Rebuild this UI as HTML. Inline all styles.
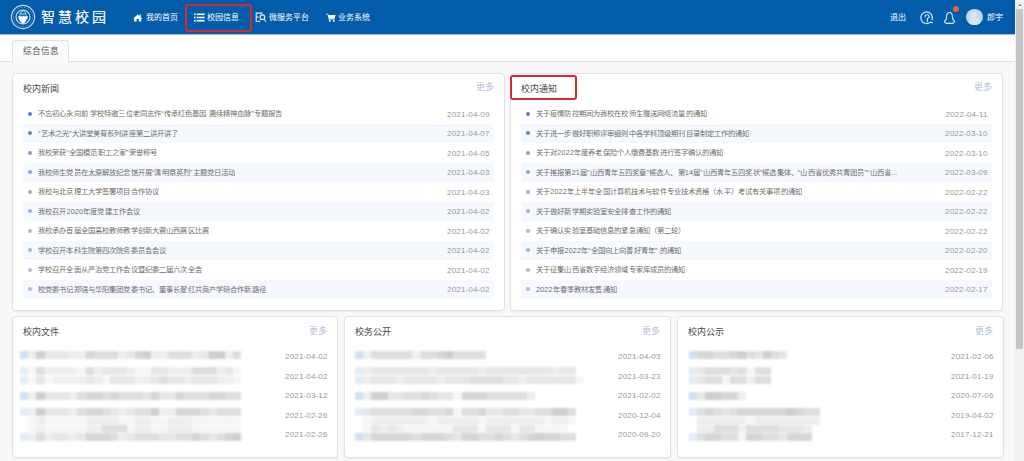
<!DOCTYPE html>
<html lang="zh-CN">
<head>
<meta charset="utf-8">
<style>
*{margin:0;padding:0;box-sizing:border-box}
html,body{width:1024px;height:461px;overflow:hidden}
body{font-family:"Liberation Sans",sans-serif;background:#f8f8f8;position:relative;color:#555}
.hdr{position:absolute;left:0;top:0;width:1015px;height:34px;background:#035caa;box-shadow:0 1px 0 #9fbcd8}
.title{position:absolute;left:41px;top:7px;font-size:14px;line-height:20px;color:#fff;letter-spacing:2.9px;font-weight:500;-webkit-text-stroke:0.15px #fff}
.nav{position:absolute;top:11.8px;font-size:8px;line-height:12px;color:#fff;white-space:nowrap}
.redbox{position:absolute;left:185px;top:3.5px;width:67px;height:28px;border:2.2px solid #d22b33;border-radius:3px}
.rdot{position:absolute;left:953.2px;top:5.9px;width:6px;height:6px;border-radius:50%;background:#f0603a}
.avatar{position:absolute;left:966px;top:8.5px;width:16.5px;height:16px;border-radius:50%;overflow:hidden;background:radial-gradient(circle at 50% 45%,#c9def2 0,#bfd7ef 60%,#a6c7e9 100%)}
.ah{position:absolute;left:5.2px;top:3px;width:6px;height:6px;border-radius:50%;background:#d8e7f4}
.ab{position:absolute;left:2.5px;top:9.5px;width:11.5px;height:9px;border-radius:50%;background:#d8e7f4}
.top{position:absolute;left:0;top:35px;width:1015px;height:27px;background:#fff;border-bottom:1px solid #e2e2e2}
.tab{position:absolute;left:12px;top:40px;width:57px;height:23px;background:#fafafa;border:1px solid #e2e2e2;border-bottom:none;border-radius:3px 3px 0 0;font-size:8.6px;color:#555;text-align:center;line-height:21.5px}
.scroll{position:absolute;left:1015px;top:0;width:9px;height:461px;background:#f1f1f1}
.arr{position:absolute;left:1017.5px;top:3.5px;width:0;height:0;border-left:2.5px solid transparent;border-right:2.5px solid transparent;border-bottom:2.5px solid #8a8a8a}
.thumb{position:absolute;left:1016px;top:9px;width:7px;height:340px;background:#c6c6c6}
.panel{position:absolute;background:#fff;border:1px solid #e2e2e2;border-radius:4px;box-shadow:0 1px 1.5px rgba(0,0,0,.05)}
.ph{position:absolute;left:10px;top:8.6px;font-size:9px;color:#484848;line-height:12px}
.more{position:absolute;right:10px;top:6.6px;font-size:9px;color:#b0c2d9;line-height:12px}
.list{position:absolute;left:10px;right:10px;top:30px}
.row{position:relative;height:19.5px;line-height:19.5px;font-size:7.3px;letter-spacing:0.12px;color:#6e6e6e;white-space:nowrap}
.row.alt{background:#f5f8fc}
.dot{position:absolute;left:5.2px;top:7.6px;width:4.2px;height:4.2px;border-radius:50%;background:#5a80b2}
.row .t{position:absolute;left:15px;overflow:hidden;text-overflow:ellipsis;max-width:370px}
.row .d{position:absolute;right:4.5px;top:0.5px;font-size:8px;letter-spacing:0.15px;color:#999}
.bd{position:absolute;right:9.5px;font-size:8px;letter-spacing:0.15px;line-height:10px;color:#999}
.redbox2{position:absolute;left:510px;top:75px;width:67px;height:25px;border:2.2px solid #d22b33;border-radius:3px}
.pb .ph{top:9.4px}
.pb .more{top:7.5px}
.mz{position:absolute;filter:blur(0.9px)}
</style>
</head>
<body>
<div class="hdr">
  <svg class="logo" width="34" height="34" viewBox="0 0 34 34" style="position:absolute;left:6px;top:0">
    <circle cx="17" cy="17" r="11.6" fill="none" stroke="#c4def7" stroke-width="1.1"/>
    <circle cx="17" cy="17" r="9.6" fill="none" stroke="#8dbbe8" stroke-width="0.8" stroke-dasharray="1 1.3"/>
    <circle cx="17" cy="17" r="7" fill="none" stroke="#d2e6fa" stroke-width="1.1"/>
    <path d="M12.1 16.3 H21.9 Q21.4 20.8 17 23.9 Q12.6 20.8 12.1 16.3Z" fill="#fff"/>
    <path d="M13.6 15.6 Q13.8 11.4 17 10.8 Q20.2 11.4 20.4 15.6" fill="none" stroke="#c9e0f7" stroke-width="0.9"/>
    <path d="M14.6 13.4 H19.4 M14.2 14.8 H19.8" stroke="#a9cdf2" stroke-width="0.7"/>
  </svg>
  <div class="title">智慧校园</div>
  <svg width="10" height="9" viewBox="0 0 10 9" style="position:absolute;left:133px;top:13.6px"><path d="M4.7 0.4 L6.6 2 V0.6 H7.8 V3 L9.3 4.4 L8.2 4.4 V7.4 H5.8 V5 H3.6 V7.4 H1.2 V4.4 L0.1 4.4Z" fill="#fff"/></svg>
  <div class="nav" style="left:146px">我的首页</div>
  <div class="redbox"></div>
  <svg width="11" height="9" viewBox="0 0 11 9" style="position:absolute;left:194px;top:13px"><g fill="#fff"><rect x="0" y="0.5" width="1.6" height="1.6"/><rect x="0" y="3.7" width="1.6" height="1.6"/><rect x="0" y="6.9" width="1.6" height="1.6"/><rect x="2.6" y="0.5" width="8" height="1.6"/><rect x="2.6" y="3.7" width="8" height="1.6"/><rect x="2.6" y="6.9" width="8" height="1.6"/></g></svg>
  <div class="nav" style="left:207px">校园信息</div>
  <svg width="12" height="11" viewBox="0 0 12 11" style="position:absolute;left:255px;top:12px"><g fill="none" stroke="#e6f1fb" stroke-width="1.1"><path d="M7.6 1.1 H1.2 V9.2 H5.6"/><path d="M1.2 5 H3.6"/><circle cx="7.4" cy="5.2" r="2.3"/><path d="M9 7 L10.9 9.8"/></g></svg>
  <div class="nav" style="left:269px">微服务平台</div>
  <svg width="10" height="9" viewBox="0 0 11 9" preserveAspectRatio="none" style="position:absolute;left:325.8px;top:12.8px"><path d="M0 0.8 H2.2 L3 2 H10.6 L9.4 5.8 H3.6 L3.8 6.4 H9.6 V7 H3.2 L1.8 1.6 H0Z" fill="#fff"/><circle cx="4.2" cy="8" r="1" fill="#fff"/><circle cx="8.6" cy="8" r="1" fill="#fff"/></svg>
  <div class="nav" style="left:338px">业务系统</div>

  <div class="nav" style="left:890px">退出</div>
  <svg width="16" height="16" viewBox="0 0 16 16" style="position:absolute;left:918.8px;top:10px"><g fill="none" stroke="#dcecfb" stroke-width="1.15" stroke-linecap="round"><path d="M11.3 12.2 A5.8 5.8 0 1 1 13.1 9.6"/><path d="M11.1 12.3 L13.4 12.6"/><path d="M6.1 6.6 Q6.1 4.7 8.2 4.7 Q10.2 4.7 10.2 6.4 Q10.2 7.7 8.3 8.6 V10.6"/></g><circle cx="8.3" cy="11.7" r="0.6" fill="#dcecfb"/></svg>
  <svg width="14" height="14" viewBox="0 0 14 14" style="position:absolute;left:943px;top:11px"><path d="M6.5 1.5 C4.2 1.5 3.6 3.8 3.6 6 C3.6 8 2.8 9.2 1.4 10.4 C1.4 11.6 3.6 12.4 6.5 12.4 C9.4 12.4 11.6 11.6 11.6 10.4 C10.2 9.2 9.4 8 9.4 6 C9.4 3.8 8.8 1.5 6.5 1.5Z" fill="none" stroke="#dcecfb" stroke-width="1.1" stroke-linejoin="round"/></svg>
  <div class="rdot"></div>
  <div class="avatar"><i class="ah"></i><i class="ab"></i></div>
  <div class="nav" style="left:986.5px">郎宇</div>
</div>
<div class="top"></div>
<div class="tab">综合信息</div>
<div class="scroll"></div>
<div class="thumb"></div><div class="arr"></div>

<div class="panel" style="left:12px;top:73px;width:493px;height:238px">
  <div class="ph">校内新闻</div>
  <div class="more">更多</div>
  <div class="list">
<div class="row"><i class="dot" style="opacity:1"></i><span class="t">不忘初心永向前 学校特邀三位老同志作“传承红色基因 赓续精神血脉”专题报告</span><span class="d">2021-04-09</span></div>
<div class="row alt"><i class="dot" style="opacity:0.95"></i><span class="t">“艺术之光”大讲堂美育系列讲座第二讲开讲了</span><span class="d">2021-04-07</span></div>
<div class="row"><i class="dot" style="opacity:0.75"></i><span class="t">我校荣获“全国模范职工之家”荣誉称号</span><span class="d">2021-04-05</span></div>
<div class="row alt"><i class="dot" style="opacity:0.7"></i><span class="t">我校师生党员在太原解放纪念馆开展“清明祭英烈”主题党日活动</span><span class="d">2021-04-03</span></div>
<div class="row"><i class="dot" style="opacity:0.62"></i><span class="t">我校与北京理工大学签署项目合作协议</span><span class="d">2021-04-03</span></div>
<div class="row alt"><i class="dot" style="opacity:0.58"></i><span class="t">我校召开2020年度党建工作会议</span><span class="d">2021-04-02</span></div>
<div class="row"><i class="dot" style="opacity:0.55"></i><span class="t">我校承办首届全国高校教师教学创新大赛山西赛区比赛</span><span class="d">2021-04-02</span></div>
<div class="row alt"><i class="dot" style="opacity:0.55"></i><span class="t">学校召开本科生院第四次院务委员会会议</span><span class="d">2021-04-02</span></div>
<div class="row"><i class="dot" style="opacity:0.52"></i><span class="t">学校召开全面从严治党工作会议暨纪委二届六次全会</span><span class="d">2021-04-02</span></div>
<div class="row alt"><i class="dot" style="opacity:0.5"></i><span class="t">校党委书记郑强与华阳集团党委书记、董事长翟红共商产学研合作新路径</span><span class="d">2021-04-02</span></div>
  </div>
</div>

<div class="panel" style="left:510px;top:73px;width:493px;height:238px">
  <div class="ph">校内通知</div>
  <div class="more">更多</div>
  <div class="list">
<div class="row"><i class="dot" style="opacity:1"></i><span class="t">关于疫情防控期间为我校在校师生赠送网络流量的通知</span><span class="d">2022-04-11</span></div>
<div class="row alt"><i class="dot" style="opacity:0.95"></i><span class="t">关于进一步做好职称评审细则中各学科顶级期刊目录制定工作的通知</span><span class="d">2022-03-10</span></div>
<div class="row"><i class="dot" style="opacity:0.75"></i><span class="t">关于对2022年度养老保险个人缴费基数进行签字确认的通知</span><span class="d">2022-03-10</span></div>
<div class="row alt"><i class="dot" style="opacity:0.7"></i><span class="t">关于推报第21届“山西青年五四奖章”候选人、第14届“山西青年五四奖状”候选集体、“山西省优秀共青团员”“山西省...</span><span class="d">2022-03-09</span></div>
<div class="row"><i class="dot" style="opacity:0.62"></i><span class="t">关于2022年上半年全国计算机技术与软件专业技术资格（水平）考试有关事项的通知</span><span class="d">2022-02-22</span></div>
<div class="row alt"><i class="dot" style="opacity:0.58"></i><span class="t">关于做好新学期实验室安全排查工作的通知</span><span class="d">2022-02-22</span></div>
<div class="row"><i class="dot" style="opacity:0.55"></i><span class="t">关于确认实验室基础信息的紧急通知（第二轮）</span><span class="d">2022-02-22</span></div>
<div class="row alt"><i class="dot" style="opacity:0.55"></i><span class="t">关于申报2022年“全国向上向善好青年” 的通知</span><span class="d">2022-02-20</span></div>
<div class="row"><i class="dot" style="opacity:0.52"></i><span class="t">关于征集山西省数字经济领域专家库成员的通知</span><span class="d">2022-02-19</span></div>
<div class="row alt"><i class="dot" style="opacity:0.5"></i><span class="t">2022年春季教材发售通知</span><span class="d">2022-02-17</span></div>
  </div>
</div>

<div class="panel pb" style="left:12px;top:316px;width:326px;height:142px">
  <div class="ph">校内文件</div>
  <div class="more">更多</div>
  <div class="bd" style="top:35px">2021-04-02</div>
  <div class="bd" style="top:54.5px">2021-04-02</div>
  <div class="bd" style="top:74px">2021-03-12</div>
  <div class="bd" style="top:93.5px">2021-02-26</div>
  <div class="bd" style="top:113px">2021-02-26</div>
</div>
<div class="panel pb" style="left:344px;top:316px;width:327px;height:142px">
  <div class="ph">校务公开</div>
  <div class="more">更多</div>
  <div class="bd" style="top:35px">2021-04-03</div>
  <div class="bd" style="top:54.5px">2021-03-23</div>
  <div class="bd" style="top:74px">2021-02-02</div>
  <div class="bd" style="top:93.5px">2020-12-04</div>
  <div class="bd" style="top:113px">2020-09-20</div>
</div>
<div class="panel pb" style="left:677px;top:316px;width:327px;height:142px">
  <div class="ph">校内公示</div>
  <div class="more">更多</div>
  <div class="bd" style="top:35px">2021-02-06</div>
  <div class="bd" style="top:54.5px">2021-01-19</div>
  <div class="bd" style="top:74px">2020-07-06</div>
  <div class="bd" style="top:93.5px">2019-04-02</div>
  <div class="bd" style="top:113px">2017-12-21</div>
</div>
<div class="mz" style="left:19.7px;top:351px;width:221.4px;height:8.2px;background:linear-gradient(90deg,#d0e0f2 0.0px,#d0e0f2 8.2px,#eeeeee 8.2px,#eeeeee 16.4px,#cecece 16.4px,#cecece 24.6px,#e6e6e6 24.6px,#e6e6e6 32.8px,#e6e6e6 32.8px,#e6e6e6 41.0px,#e6e6e6 41.0px,#e6e6e6 49.2px,#eeeeee 49.2px,#eeeeee 57.4px,#eeeeee 57.4px,#eeeeee 65.6px,#d6d6d6 65.6px,#d6d6d6 73.8px,#dedede 73.8px,#dedede 82.0px,#dedede 82.0px,#dedede 90.2px,#dedede 90.2px,#dedede 98.4px,#eeeeee 98.4px,#eeeeee 106.6px,#e6e6e6 106.6px,#e6e6e6 114.8px,#d6d6d6 114.8px,#d6d6d6 123.0px,#cecece 123.0px,#cecece 131.2px,#eeeeee 131.2px,#eeeeee 139.4px,#eeeeee 139.4px,#eeeeee 147.6px,#dedede 147.6px,#dedede 155.8px,#dedede 155.8px,#dedede 164.0px,#dedede 164.0px,#dedede 172.2px,#eeeeee 172.2px,#eeeeee 180.4px,#e6e6e6 180.4px,#e6e6e6 188.6px,#cecece 188.6px,#cecece 196.8px,#cecece 196.8px,#cecece 205.0px,#eeeeee 205.0px,#eeeeee 213.2px,#dedede 213.2px,#dedede 221.4px)"></div>
<div class="mz" style="left:19.7px;top:367.3px;width:221.4px;height:8.2px;background:linear-gradient(90deg,#e2edf8 0.0px,#e2edf8 8.2px,#f6f6f6 8.2px,#f6f6f6 16.4px,#dedede 16.4px,#dedede 24.6px,#eeeeee 24.6px,#eeeeee 32.8px,#eeeeee 32.8px,#eeeeee 41.0px,#eeeeee 41.0px,#eeeeee 49.2px,#eeeeee 49.2px,#eeeeee 57.4px,#f6f6f6 57.4px,#f6f6f6 65.6px,#dedede 65.6px,#dedede 73.8px,#eeeeee 73.8px,#eeeeee 82.0px,#e6e6e6 82.0px,#e6e6e6 90.2px,#e6e6e6 90.2px,#e6e6e6 98.4px,#e6e6e6 98.4px,#e6e6e6 106.6px,#eeeeee 106.6px,#eeeeee 114.8px,#f6f6f6 114.8px,#f6f6f6 123.0px,#f6f6f6 123.0px,#f6f6f6 131.2px,#e6e6e6 131.2px,#e6e6e6 139.4px,#e6e6e6 139.4px,#e6e6e6 147.6px,#eeeeee 147.6px,#eeeeee 155.8px,#eeeeee 155.8px,#eeeeee 164.0px,#eeeeee 164.0px,#eeeeee 172.2px,#dedede 172.2px,#dedede 180.4px,#dedede 180.4px,#dedede 188.6px,#dedede 188.6px,#dedede 196.8px,#eeeeee 196.8px,#eeeeee 205.0px,#e6e6e6 205.0px,#e6e6e6 213.2px,#f6f6f6 213.2px,#f6f6f6 221.4px)"></div>
<div class="mz" style="left:19.7px;top:375.5px;width:221.4px;height:8.2px;background:linear-gradient(90deg,#e2edf8 0.0px,#e2edf8 8.2px,#f6f6f6 8.2px,#f6f6f6 16.4px,#e6e6e6 16.4px,#e6e6e6 24.6px,#f6f6f6 24.6px,#f6f6f6 32.8px,#eeeeee 32.8px,#eeeeee 41.0px,#eeeeee 41.0px,#eeeeee 49.2px,#eeeeee 49.2px,#eeeeee 57.4px,#eeeeee 57.4px,#eeeeee 65.6px,#e6e6e6 65.6px,#e6e6e6 73.8px,#eeeeee 73.8px,#eeeeee 82.0px,#f6f6f6 82.0px,#f6f6f6 90.2px,#e6e6e6 90.2px,#e6e6e6 98.4px,#e6e6e6 98.4px,#e6e6e6 106.6px,#e6e6e6 106.6px,#e6e6e6 114.8px,#eeeeee 114.8px,#eeeeee 123.0px,#eeeeee 123.0px,#eeeeee 131.2px,#e6e6e6 131.2px,#e6e6e6 139.4px,#dedede 139.4px,#dedede 147.6px,#e6e6e6 147.6px,#e6e6e6 155.8px,#e6e6e6 155.8px,#e6e6e6 164.0px,#eeeeee 164.0px,#eeeeee 172.2px,#e6e6e6 172.2px,#e6e6e6 180.4px,#e6e6e6 180.4px,#e6e6e6 188.6px,#e6e6e6 188.6px,#e6e6e6 196.8px,#eeeeee 196.8px,#eeeeee 205.0px,#eeeeee 205.0px,#eeeeee 213.2px,#f6f6f6 213.2px,#f6f6f6 221.4px)"></div>
<div class="mz" style="left:19.7px;top:391.9px;width:221.4px;height:8.2px;background:linear-gradient(90deg,#d0e0f2 0.0px,#d0e0f2 8.2px,#eeeeee 8.2px,#eeeeee 16.4px,#cecece 16.4px,#cecece 24.6px,#e6e6e6 24.6px,#e6e6e6 32.8px,#e6e6e6 32.8px,#e6e6e6 41.0px,#e6e6e6 41.0px,#e6e6e6 49.2px,#eeeeee 49.2px,#eeeeee 57.4px,#dedede 57.4px,#dedede 65.6px,#d6d6d6 65.6px,#d6d6d6 73.8px,#d6d6d6 73.8px,#d6d6d6 82.0px,#dedede 82.0px,#dedede 90.2px,#d6d6d6 90.2px,#d6d6d6 98.4px,#dedede 98.4px,#dedede 106.6px,#dedede 106.6px,#dedede 114.8px,#dedede 114.8px,#dedede 123.0px,#e6e6e6 123.0px,#e6e6e6 131.2px,#d6d6d6 131.2px,#d6d6d6 139.4px,#e6e6e6 139.4px,#e6e6e6 147.6px,#e6e6e6 147.6px,#e6e6e6 155.8px,#d6d6d6 155.8px,#d6d6d6 164.0px,#dedede 164.0px,#dedede 172.2px,#dedede 172.2px,#dedede 180.4px,#dedede 180.4px,#dedede 188.6px,#d6d6d6 188.6px,#d6d6d6 196.8px,#d6d6d6 196.8px,#d6d6d6 205.0px,#dedede 205.0px,#dedede 213.2px,#dedede 213.2px,#dedede 221.4px)"></div>
<div class="mz" style="left:19.7px;top:408.3px;width:221.4px;height:8.2px;background:linear-gradient(90deg,#e2edf8 0.0px,#e2edf8 8.2px,#eeeeee 8.2px,#eeeeee 16.4px,#cecece 16.4px,#cecece 24.6px,#e6e6e6 24.6px,#e6e6e6 32.8px,#e6e6e6 32.8px,#e6e6e6 41.0px,#e6e6e6 41.0px,#e6e6e6 49.2px,#eeeeee 49.2px,#eeeeee 57.4px,#dedede 57.4px,#dedede 65.6px,#d6d6d6 65.6px,#d6d6d6 73.8px,#d6d6d6 73.8px,#d6d6d6 82.0px,#dedede 82.0px,#dedede 90.2px,#e6e6e6 90.2px,#e6e6e6 98.4px,#eeeeee 98.4px,#eeeeee 106.6px,#e6e6e6 106.6px,#e6e6e6 114.8px,#dedede 114.8px,#dedede 123.0px,#dedede 123.0px,#dedede 131.2px,#cecece 131.2px,#cecece 139.4px,#eeeeee 139.4px,#eeeeee 147.6px,#eeeeee 147.6px,#eeeeee 155.8px,#d6d6d6 155.8px,#d6d6d6 164.0px,#d6d6d6 164.0px,#d6d6d6 172.2px,#d6d6d6 172.2px,#d6d6d6 180.4px,#dedede 180.4px,#dedede 188.6px,#e6e6e6 188.6px,#e6e6e6 196.8px,#dedede 196.8px,#dedede 205.0px,#dedede 205.0px,#dedede 213.2px,#dedede 213.2px,#dedede 221.4px)"></div>
<div class="mz" style="left:19.7px;top:416.5px;width:221.4px;height:8.2px;background:linear-gradient(90deg,#ffffff 0.0px,#ffffff 8.2px,#f6f6f6 8.2px,#f6f6f6 16.4px,#eeeeee 16.4px,#eeeeee 24.6px,#f6f6f6 24.6px,#f6f6f6 32.8px,#f6f6f6 32.8px,#f6f6f6 41.0px,#f6f6f6 41.0px,#f6f6f6 49.2px,#f6f6f6 49.2px,#f6f6f6 57.4px,#f6f6f6 57.4px,#f6f6f6 65.6px,#eeeeee 65.6px,#eeeeee 73.8px,#eeeeee 73.8px,#eeeeee 82.0px,#eeeeee 82.0px,#eeeeee 90.2px,#eeeeee 90.2px,#eeeeee 98.4px,#f6f6f6 98.4px,#f6f6f6 106.6px,#f6f6f6 106.6px,#f6f6f6 114.8px,#eeeeee 114.8px,#eeeeee 123.0px,#eeeeee 123.0px,#eeeeee 131.2px,#f6f6f6 131.2px,#f6f6f6 139.4px,#f6f6f6 139.4px,#f6f6f6 147.6px,#eeeeee 147.6px,#eeeeee 155.8px,#eeeeee 155.8px,#eeeeee 164.0px,#eeeeee 164.0px,#eeeeee 172.2px,#f6f6f6 172.2px,#f6f6f6 180.4px,#f6f6f6 180.4px,#f6f6f6 188.6px,#f6f6f6 188.6px,#f6f6f6 196.8px,#f6f6f6 196.8px,#f6f6f6 205.0px,#f6f6f6 205.0px,#f6f6f6 213.2px,#f6f6f6 213.2px,#f6f6f6 221.4px)"></div>
<div class="mz" style="left:19.7px;top:424.7px;width:221.4px;height:8.2px;background:linear-gradient(90deg,#ffffff 0.0px,#ffffff 8.2px,#f6f6f6 8.2px,#f6f6f6 16.4px,#eeeeee 16.4px,#eeeeee 24.6px,#f6f6f6 24.6px,#f6f6f6 32.8px,#f6f6f6 32.8px,#f6f6f6 41.0px,#f6f6f6 41.0px,#f6f6f6 49.2px,#f6f6f6 49.2px,#f6f6f6 57.4px,#f6f6f6 57.4px,#f6f6f6 65.6px,#eeeeee 65.6px,#eeeeee 73.8px,#eeeeee 73.8px,#eeeeee 82.0px,#dedede 82.0px,#dedede 90.2px,#dedede 90.2px,#dedede 98.4px,#dedede 98.4px,#dedede 106.6px,#f6f6f6 106.6px,#f6f6f6 114.8px,#eeeeee 114.8px,#eeeeee 123.0px,#eeeeee 123.0px,#eeeeee 131.2px,#f6f6f6 131.2px,#f6f6f6 139.4px,#f6f6f6 139.4px,#f6f6f6 147.6px,#eeeeee 147.6px,#eeeeee 155.8px,#eeeeee 155.8px,#eeeeee 164.0px,#eeeeee 164.0px,#eeeeee 172.2px,#f6f6f6 172.2px,#f6f6f6 180.4px,#f6f6f6 180.4px,#f6f6f6 188.6px,#f6f6f6 188.6px,#f6f6f6 196.8px,#f6f6f6 196.8px,#f6f6f6 205.0px,#f6f6f6 205.0px,#f6f6f6 213.2px,#f6f6f6 213.2px,#f6f6f6 221.4px)"></div>
<div class="mz" style="left:19.7px;top:432.90000000000003px;width:221.4px;height:8.2px;background:linear-gradient(90deg,#e2edf8 0.0px,#e2edf8 8.2px,#eeeeee 8.2px,#eeeeee 16.4px,#dedede 16.4px,#dedede 24.6px,#eeeeee 24.6px,#eeeeee 32.8px,#e6e6e6 32.8px,#e6e6e6 41.0px,#e6e6e6 41.0px,#e6e6e6 49.2px,#eeeeee 49.2px,#eeeeee 57.4px,#e6e6e6 57.4px,#e6e6e6 65.6px,#d6d6d6 65.6px,#d6d6d6 73.8px,#d6d6d6 73.8px,#d6d6d6 82.0px,#d6d6d6 82.0px,#d6d6d6 90.2px,#dedede 90.2px,#dedede 98.4px,#eeeeee 98.4px,#eeeeee 106.6px,#e6e6e6 106.6px,#e6e6e6 114.8px,#dedede 114.8px,#dedede 123.0px,#dedede 123.0px,#dedede 131.2px,#dedede 131.2px,#dedede 139.4px,#e6e6e6 139.4px,#e6e6e6 147.6px,#e6e6e6 147.6px,#e6e6e6 155.8px,#dedede 155.8px,#dedede 164.0px,#dedede 164.0px,#dedede 172.2px,#d6d6d6 172.2px,#d6d6d6 180.4px,#dedede 180.4px,#dedede 188.6px,#e6e6e6 188.6px,#e6e6e6 196.8px,#dedede 196.8px,#dedede 205.0px,#d6d6d6 205.0px,#d6d6d6 213.2px,#cecece 213.2px,#cecece 221.4px)"></div>
<div class="mz" style="left:354.7px;top:351px;width:131.2px;height:8.2px;background:linear-gradient(90deg,#d0e0f2 0.0px,#d0e0f2 8.2px,#eeeeee 8.2px,#eeeeee 16.4px,#dedede 16.4px,#dedede 24.6px,#dedede 24.6px,#dedede 32.8px,#dedede 32.8px,#dedede 41.0px,#dedede 41.0px,#dedede 49.2px,#dedede 49.2px,#dedede 57.4px,#eeeeee 57.4px,#eeeeee 65.6px,#dedede 65.6px,#dedede 73.8px,#dedede 73.8px,#dedede 82.0px,#d6d6d6 82.0px,#d6d6d6 90.2px,#cecece 90.2px,#cecece 98.4px,#dedede 98.4px,#dedede 106.6px,#dedede 106.6px,#dedede 114.8px,#dedede 114.8px,#dedede 123.0px,#dedede 123.0px,#dedede 131.2px)"></div>
<div class="mz" style="left:354.7px;top:367.3px;width:221.4px;height:8.2px;background:linear-gradient(90deg,#e2edf8 0.0px,#e2edf8 8.2px,#eeeeee 8.2px,#eeeeee 16.4px,#e6e6e6 16.4px,#e6e6e6 24.6px,#e6e6e6 24.6px,#e6e6e6 32.8px,#e6e6e6 32.8px,#e6e6e6 41.0px,#e6e6e6 41.0px,#e6e6e6 49.2px,#e6e6e6 49.2px,#e6e6e6 57.4px,#e6e6e6 57.4px,#e6e6e6 65.6px,#e6e6e6 65.6px,#e6e6e6 73.8px,#eeeeee 73.8px,#eeeeee 82.0px,#e6e6e6 82.0px,#e6e6e6 90.2px,#e6e6e6 90.2px,#e6e6e6 98.4px,#e6e6e6 98.4px,#e6e6e6 106.6px,#e6e6e6 106.6px,#e6e6e6 114.8px,#e6e6e6 114.8px,#e6e6e6 123.0px,#eeeeee 123.0px,#eeeeee 131.2px,#e6e6e6 131.2px,#e6e6e6 139.4px,#e6e6e6 139.4px,#e6e6e6 147.6px,#e6e6e6 147.6px,#e6e6e6 155.8px,#e6e6e6 155.8px,#e6e6e6 164.0px,#e6e6e6 164.0px,#e6e6e6 172.2px,#e6e6e6 172.2px,#e6e6e6 180.4px,#e6e6e6 180.4px,#e6e6e6 188.6px,#e6e6e6 188.6px,#e6e6e6 196.8px,#eeeeee 196.8px,#eeeeee 205.0px,#e6e6e6 205.0px,#e6e6e6 213.2px,#e6e6e6 213.2px,#e6e6e6 221.4px)"></div>
<div class="mz" style="left:354.7px;top:375.5px;width:229.6px;height:8.2px;background:linear-gradient(90deg,#e2edf8 0.0px,#e2edf8 8.2px,#eeeeee 8.2px,#eeeeee 16.4px,#e6e6e6 16.4px,#e6e6e6 24.6px,#e6e6e6 24.6px,#e6e6e6 32.8px,#e6e6e6 32.8px,#e6e6e6 41.0px,#eeeeee 41.0px,#eeeeee 49.2px,#e6e6e6 49.2px,#e6e6e6 57.4px,#e6e6e6 57.4px,#e6e6e6 65.6px,#e6e6e6 65.6px,#e6e6e6 73.8px,#e6e6e6 73.8px,#e6e6e6 82.0px,#eeeeee 82.0px,#eeeeee 90.2px,#e6e6e6 90.2px,#e6e6e6 98.4px,#e6e6e6 98.4px,#e6e6e6 106.6px,#e6e6e6 106.6px,#e6e6e6 114.8px,#dedede 114.8px,#dedede 123.0px,#dedede 123.0px,#dedede 131.2px,#dedede 131.2px,#dedede 139.4px,#dedede 139.4px,#dedede 147.6px,#e6e6e6 147.6px,#e6e6e6 155.8px,#e6e6e6 155.8px,#e6e6e6 164.0px,#eeeeee 164.0px,#eeeeee 172.2px,#e6e6e6 172.2px,#e6e6e6 180.4px,#e6e6e6 180.4px,#e6e6e6 188.6px,#e6e6e6 188.6px,#e6e6e6 196.8px,#e6e6e6 196.8px,#e6e6e6 205.0px,#e6e6e6 205.0px,#e6e6e6 213.2px,#e6e6e6 213.2px,#e6e6e6 221.4px,#f6f6f6 221.4px,#f6f6f6 229.6px)"></div>
<div class="mz" style="left:354.7px;top:391.9px;width:180.4px;height:8.2px;background:linear-gradient(90deg,#d0e0f2 0.0px,#d0e0f2 8.2px,#eeeeee 8.2px,#eeeeee 16.4px,#cecece 16.4px,#cecece 24.6px,#cecece 24.6px,#cecece 32.8px,#e6e6e6 32.8px,#e6e6e6 41.0px,#e6e6e6 41.0px,#e6e6e6 49.2px,#dedede 49.2px,#dedede 57.4px,#dedede 57.4px,#dedede 65.6px,#d6d6d6 65.6px,#d6d6d6 73.8px,#dedede 73.8px,#dedede 82.0px,#e6e6e6 82.0px,#e6e6e6 90.2px,#e6e6e6 90.2px,#e6e6e6 98.4px,#f6f6f6 98.4px,#f6f6f6 106.6px,#d6d6d6 106.6px,#d6d6d6 114.8px,#d6d6d6 114.8px,#d6d6d6 123.0px,#d6d6d6 123.0px,#d6d6d6 131.2px,#dedede 131.2px,#dedede 139.4px,#dedede 139.4px,#dedede 147.6px,#dedede 147.6px,#dedede 155.8px,#dedede 155.8px,#dedede 164.0px,#dedede 164.0px,#dedede 172.2px,#eeeeee 172.2px,#eeeeee 180.4px)"></div>
<div class="mz" style="left:354.7px;top:408.3px;width:221.4px;height:8.2px;background:linear-gradient(90deg,#e2edf8 0.0px,#e2edf8 8.2px,#e6e6e6 8.2px,#e6e6e6 16.4px,#dedede 16.4px,#dedede 24.6px,#dedede 24.6px,#dedede 32.8px,#dedede 32.8px,#dedede 41.0px,#dedede 41.0px,#dedede 49.2px,#dedede 49.2px,#dedede 57.4px,#d6d6d6 57.4px,#d6d6d6 65.6px,#d6d6d6 65.6px,#d6d6d6 73.8px,#dedede 73.8px,#dedede 82.0px,#dedede 82.0px,#dedede 90.2px,#d6d6d6 90.2px,#d6d6d6 98.4px,#f6f6f6 98.4px,#f6f6f6 106.6px,#dedede 106.6px,#dedede 114.8px,#dedede 114.8px,#dedede 123.0px,#d6d6d6 123.0px,#d6d6d6 131.2px,#e6e6e6 131.2px,#e6e6e6 139.4px,#e6e6e6 139.4px,#e6e6e6 147.6px,#dedede 147.6px,#dedede 155.8px,#dedede 155.8px,#dedede 164.0px,#e6e6e6 164.0px,#e6e6e6 172.2px,#e6e6e6 172.2px,#e6e6e6 180.4px,#dedede 180.4px,#dedede 188.6px,#dedede 188.6px,#dedede 196.8px,#cecece 196.8px,#cecece 205.0px,#cecece 205.0px,#cecece 213.2px,#dedede 213.2px,#dedede 221.4px)"></div>
<div class="mz" style="left:354.7px;top:416.5px;width:221.4px;height:8.2px;background:linear-gradient(90deg,#ffffff 0.0px,#ffffff 8.2px,#f6f6f6 8.2px,#f6f6f6 16.4px,#eeeeee 16.4px,#eeeeee 24.6px,#eeeeee 24.6px,#eeeeee 32.8px,#eeeeee 32.8px,#eeeeee 41.0px,#eeeeee 41.0px,#eeeeee 49.2px,#eeeeee 49.2px,#eeeeee 57.4px,#eeeeee 57.4px,#eeeeee 65.6px,#eeeeee 65.6px,#eeeeee 73.8px,#f6f6f6 73.8px,#f6f6f6 82.0px,#eeeeee 82.0px,#eeeeee 90.2px,#eeeeee 90.2px,#eeeeee 98.4px,#eeeeee 98.4px,#eeeeee 106.6px,#eeeeee 106.6px,#eeeeee 114.8px,#eeeeee 114.8px,#eeeeee 123.0px,#f6f6f6 123.0px,#f6f6f6 131.2px,#eeeeee 131.2px,#eeeeee 139.4px,#eeeeee 139.4px,#eeeeee 147.6px,#eeeeee 147.6px,#eeeeee 155.8px,#eeeeee 155.8px,#eeeeee 164.0px,#eeeeee 164.0px,#eeeeee 172.2px,#eeeeee 172.2px,#eeeeee 180.4px,#eeeeee 180.4px,#eeeeee 188.6px,#f6f6f6 188.6px,#f6f6f6 196.8px,#eeeeee 196.8px,#eeeeee 205.0px,#eeeeee 205.0px,#eeeeee 213.2px,#f6f6f6 213.2px,#f6f6f6 221.4px)"></div>
<div class="mz" style="left:354.7px;top:424.7px;width:221.4px;height:8.2px;background:linear-gradient(90deg,#ffffff 0.0px,#ffffff 8.2px,#f6f6f6 8.2px,#f6f6f6 16.4px,#e6e6e6 16.4px,#e6e6e6 24.6px,#eeeeee 24.6px,#eeeeee 32.8px,#e6e6e6 32.8px,#e6e6e6 41.0px,#eeeeee 41.0px,#eeeeee 49.2px,#f6f6f6 49.2px,#f6f6f6 57.4px,#f6f6f6 57.4px,#f6f6f6 65.6px,#f6f6f6 65.6px,#f6f6f6 73.8px,#f6f6f6 73.8px,#f6f6f6 82.0px,#f6f6f6 82.0px,#f6f6f6 90.2px,#f6f6f6 90.2px,#f6f6f6 98.4px,#e6e6e6 98.4px,#e6e6e6 106.6px,#e6e6e6 106.6px,#e6e6e6 114.8px,#e6e6e6 114.8px,#e6e6e6 123.0px,#f6f6f6 123.0px,#f6f6f6 131.2px,#e6e6e6 131.2px,#e6e6e6 139.4px,#e6e6e6 139.4px,#e6e6e6 147.6px,#e6e6e6 147.6px,#e6e6e6 155.8px,#f6f6f6 155.8px,#f6f6f6 164.0px,#e6e6e6 164.0px,#e6e6e6 172.2px,#e6e6e6 172.2px,#e6e6e6 180.4px,#f6f6f6 180.4px,#f6f6f6 188.6px,#f6f6f6 188.6px,#f6f6f6 196.8px,#f6f6f6 196.8px,#f6f6f6 205.0px,#f6f6f6 205.0px,#f6f6f6 213.2px,#ffffff 213.2px,#ffffff 221.4px)"></div>
<div class="mz" style="left:354.7px;top:432.90000000000003px;width:221.4px;height:8.2px;background:linear-gradient(90deg,#d0e0f2 0.0px,#d0e0f2 8.2px,#e6e6e6 8.2px,#e6e6e6 16.4px,#d6d6d6 16.4px,#d6d6d6 24.6px,#d6d6d6 24.6px,#d6d6d6 32.8px,#d6d6d6 32.8px,#d6d6d6 41.0px,#d6d6d6 41.0px,#d6d6d6 49.2px,#d6d6d6 49.2px,#d6d6d6 57.4px,#dedede 57.4px,#dedede 65.6px,#d6d6d6 65.6px,#d6d6d6 73.8px,#d6d6d6 73.8px,#d6d6d6 82.0px,#d6d6d6 82.0px,#d6d6d6 90.2px,#dedede 90.2px,#dedede 98.4px,#e6e6e6 98.4px,#e6e6e6 106.6px,#d6d6d6 106.6px,#d6d6d6 114.8px,#d6d6d6 114.8px,#d6d6d6 123.0px,#dedede 123.0px,#dedede 131.2px,#dedede 131.2px,#dedede 139.4px,#d6d6d6 139.4px,#d6d6d6 147.6px,#dedede 147.6px,#dedede 155.8px,#e6e6e6 155.8px,#e6e6e6 164.0px,#dedede 164.0px,#dedede 172.2px,#d6d6d6 172.2px,#d6d6d6 180.4px,#cecece 180.4px,#cecece 188.6px,#d6d6d6 188.6px,#d6d6d6 196.8px,#d6d6d6 196.8px,#d6d6d6 205.0px,#dedede 205.0px,#dedede 213.2px,#dedede 213.2px,#dedede 221.4px)"></div>
<div class="mz" style="left:688.7px;top:351px;width:98.4px;height:8.2px;background:linear-gradient(90deg,#d0e0f2 0.0px,#d0e0f2 8.2px,#d6d6d6 8.2px,#d6d6d6 16.4px,#d6d6d6 16.4px,#d6d6d6 24.6px,#dedede 24.6px,#dedede 32.8px,#dedede 32.8px,#dedede 41.0px,#d6d6d6 41.0px,#d6d6d6 49.2px,#cecece 49.2px,#cecece 57.4px,#dedede 57.4px,#dedede 65.6px,#e6e6e6 65.6px,#e6e6e6 73.8px,#cecece 73.8px,#cecece 82.0px,#dedede 82.0px,#dedede 90.2px,#e6e6e6 90.2px,#e6e6e6 98.4px)"></div>
<div class="mz" style="left:688.7px;top:367.3px;width:82.0px;height:8.2px;background:linear-gradient(90deg,#e2edf8 0.0px,#e2edf8 8.2px,#e6e6e6 8.2px,#e6e6e6 16.4px,#dedede 16.4px,#dedede 24.6px,#dedede 24.6px,#dedede 32.8px,#dedede 32.8px,#dedede 41.0px,#e6e6e6 41.0px,#e6e6e6 49.2px,#dedede 49.2px,#dedede 57.4px,#f6f6f6 57.4px,#f6f6f6 65.6px,#dedede 65.6px,#dedede 73.8px,#dedede 73.8px,#dedede 82.0px)"></div>
<div class="mz" style="left:688.7px;top:375.5px;width:82.0px;height:8.2px;background:linear-gradient(90deg,#e2edf8 0.0px,#e2edf8 8.2px,#e6e6e6 8.2px,#e6e6e6 16.4px,#dedede 16.4px,#dedede 24.6px,#dedede 24.6px,#dedede 32.8px,#f6f6f6 32.8px,#f6f6f6 41.0px,#dedede 41.0px,#dedede 49.2px,#dedede 49.2px,#dedede 57.4px,#eeeeee 57.4px,#eeeeee 65.6px,#dedede 65.6px,#dedede 73.8px,#dedede 73.8px,#dedede 82.0px)"></div>
<div class="mz" style="left:688.7px;top:391.9px;width:57.4px;height:8.2px;background:linear-gradient(90deg,#d0e0f2 0.0px,#d0e0f2 8.2px,#e6e6e6 8.2px,#e6e6e6 16.4px,#cecece 16.4px,#cecece 24.6px,#cecece 24.6px,#cecece 32.8px,#d6d6d6 32.8px,#d6d6d6 41.0px,#d6d6d6 41.0px,#d6d6d6 49.2px,#eeeeee 49.2px,#eeeeee 57.4px)"></div>
<div class="mz" style="left:688.7px;top:408.3px;width:131.2px;height:8.2px;background:linear-gradient(90deg,#e2edf8 0.0px,#e2edf8 8.2px,#dedede 8.2px,#dedede 16.4px,#d6d6d6 16.4px,#d6d6d6 24.6px,#dedede 24.6px,#dedede 32.8px,#e6e6e6 32.8px,#e6e6e6 41.0px,#dedede 41.0px,#dedede 49.2px,#d6d6d6 49.2px,#d6d6d6 57.4px,#d6d6d6 57.4px,#d6d6d6 65.6px,#d6d6d6 65.6px,#d6d6d6 73.8px,#d6d6d6 73.8px,#d6d6d6 82.0px,#d6d6d6 82.0px,#d6d6d6 90.2px,#d6d6d6 90.2px,#d6d6d6 98.4px,#cecece 98.4px,#cecece 106.6px,#d6d6d6 106.6px,#d6d6d6 114.8px,#dedede 114.8px,#dedede 123.0px,#dedede 123.0px,#dedede 131.2px)"></div>
<div class="mz" style="left:688.7px;top:416.5px;width:131.2px;height:8.2px;background:linear-gradient(90deg,#ffffff 0.0px,#ffffff 8.2px,#eeeeee 8.2px,#eeeeee 16.4px,#eeeeee 16.4px,#eeeeee 24.6px,#eeeeee 24.6px,#eeeeee 32.8px,#eeeeee 32.8px,#eeeeee 41.0px,#eeeeee 41.0px,#eeeeee 49.2px,#eeeeee 49.2px,#eeeeee 57.4px,#f6f6f6 57.4px,#f6f6f6 65.6px,#eeeeee 65.6px,#eeeeee 73.8px,#eeeeee 73.8px,#eeeeee 82.0px,#eeeeee 82.0px,#eeeeee 90.2px,#eeeeee 90.2px,#eeeeee 98.4px,#eeeeee 98.4px,#eeeeee 106.6px,#eeeeee 106.6px,#eeeeee 114.8px,#eeeeee 114.8px,#eeeeee 123.0px,#eeeeee 123.0px,#eeeeee 131.2px)"></div>
<div class="mz" style="left:688.7px;top:424.7px;width:123.0px;height:8.2px;background:linear-gradient(90deg,#ffffff 0.0px,#ffffff 8.2px,#eeeeee 8.2px,#eeeeee 16.4px,#eeeeee 16.4px,#eeeeee 24.6px,#dedede 24.6px,#dedede 32.8px,#dedede 32.8px,#dedede 41.0px,#dedede 41.0px,#dedede 49.2px,#eeeeee 49.2px,#eeeeee 57.4px,#dedede 57.4px,#dedede 65.6px,#dedede 65.6px,#dedede 73.8px,#dedede 73.8px,#dedede 82.0px,#dedede 82.0px,#dedede 90.2px,#e6e6e6 90.2px,#e6e6e6 98.4px,#e6e6e6 98.4px,#e6e6e6 106.6px,#e6e6e6 106.6px,#e6e6e6 114.8px,#eeeeee 114.8px,#eeeeee 123.0px)"></div>
<div class="mz" style="left:688.7px;top:432.90000000000003px;width:123.0px;height:8.2px;background:linear-gradient(90deg,#e2edf8 0.0px,#e2edf8 8.2px,#dedede 8.2px,#dedede 16.4px,#d6d6d6 16.4px,#d6d6d6 24.6px,#d6d6d6 24.6px,#d6d6d6 32.8px,#dedede 32.8px,#dedede 41.0px,#dedede 41.0px,#dedede 49.2px,#f6f6f6 49.2px,#f6f6f6 57.4px,#d6d6d6 57.4px,#d6d6d6 65.6px,#d6d6d6 65.6px,#d6d6d6 73.8px,#dedede 73.8px,#dedede 82.0px,#dedede 82.0px,#dedede 90.2px,#e6e6e6 90.2px,#e6e6e6 98.4px,#d6d6d6 98.4px,#d6d6d6 106.6px,#d6d6d6 106.6px,#d6d6d6 114.8px,#d6d6d6 114.8px,#d6d6d6 123.0px)"></div>
<div class="redbox2"></div>
</body>
</html>
